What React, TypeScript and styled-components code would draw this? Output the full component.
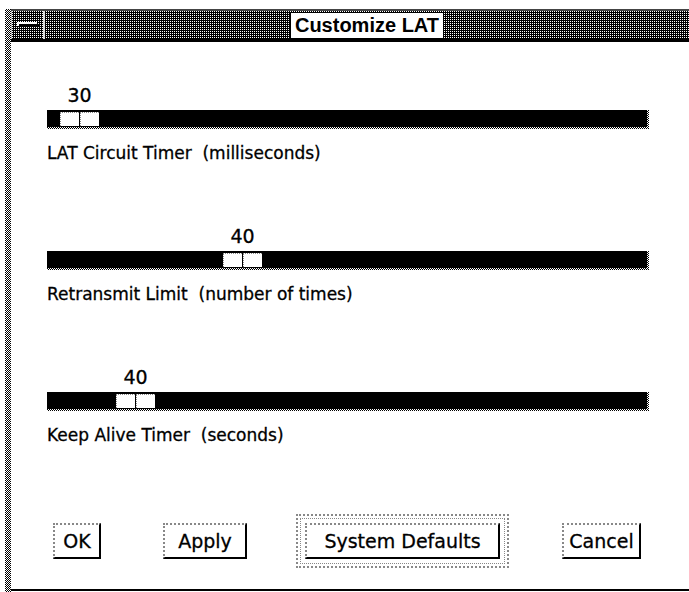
import styled, { createGlobalStyle } from "styled-components";

const GlobalStyle = createGlobalStyle`
  html, body { margin: 0; padding: 0; background: #fff; }
  body { font-family: "DejaVu Sans", "Liberation Sans", sans-serif; color: #000; }
`;

// 1px checkerboard, the X11 "50% grey"
const stipple = "repeating-conic-gradient(#000 0 25%, #fff 0 50%) 0 0 / 2px 2px";
// dark stipple for the title bar: one white dot per 2x2
const darkStipple = "repeating-conic-gradient(#fff 0 25%, #000 0 100%) 0 0 / 2px 2px";

type SliderSpec = { label: string; value: number; min: number; max: number };

const sliders: SliderSpec[] = [
  { label: "LAT Circuit Timer  (milliseconds)", value: 30, min: 10, max: 870 },
  { label: "Retransmit Limit  (number of times)", value: 40, min: 4, max: 119 },
  { label: "Keep Alive Timer  (seconds)", value: 40, min: 10, max: 255 },
];

const TRAVEL = 561;

function Slider({ spec }: { spec: SliderSpec }) {
  const offset = Math.round(((spec.value - spec.min) / (spec.max - spec.min)) * TRAVEL);
  return (
    <SliderGroup>
      <ValueRow>
        <Value style={{ marginLeft: offset }}>{spec.value}</Value>
      </ValueRow>
      <Track>
        <TrackFill>
          <Thumb style={{ marginLeft: offset }}>
            <ThumbHalf />
            <ThumbHalf />
          </Thumb>
        </TrackFill>
      </Track>
      <Label>{spec.label}</Label>
    </SliderGroup>
  );
}

export default function App() {
  return (
    <>
      <GlobalStyle />
      <Screen>
        <Frame />
        <Window>
          <TitleBar>
            <CloseBox>
              <svg width="22" height="6" viewBox="0 0 22 6">
                <rect x="2" y="2" width="20" height="2" fill="#000" />
                <rect x="0" y="0" width="20" height="2" fill="#fff" />
                <rect x="0" y="0" width="2" height="4" fill="#fff" />
              </svg>
            </CloseBox>
            <TitleArea>
              <TitleText>Customize LAT</TitleText>
            </TitleArea>
          </TitleBar>
          <Body>
            {sliders.map((s) => (
              <Slider key={s.label} spec={s} />
            ))}
            <ButtonRow>
              <Button $width={48}>OK</Button>
              <Button $width={84}>Apply</Button>
              <DefaultFrame>
                <DefaultRing>
                  <Button $width={195}>System Defaults</Button>
                </DefaultRing>
              </DefaultFrame>
              <Button $width={79}>Cancel</Button>
            </ButtonRow>
          </Body>
        </Window>
      </Screen>
    </>
  );
}

const Screen = styled.div`
  display: flex;
  height: 100vh;
  box-sizing: border-box;
  padding: 9px 0 0 5px;
`;

const Frame = styled.div`
  flex: none;
  width: 6px;
  background: ${stipple};
`;

const Window = styled.div`
  flex: 1;
  display: flex;
  flex-direction: column;
  border-bottom: 2px solid #000;
  margin-bottom: 1px;
`;

const TitleBar = styled.div`
  flex: none;
  display: flex;
  height: 33px;
  box-sizing: border-box;
  background: ${darkStipple};
  border-top: 2px solid #444;
  border-bottom: 3px solid #000;
`;

const CloseBox = styled.div`
  width: 31px;
  display: flex;
  align-items: center;
  justify-content: center;
  border-left: 1px solid #bbb;
  border-right: 2px solid #ddd;
`;

const TitleArea = styled.div`
  flex: 1;
  display: flex;
  align-items: center;
  justify-content: center;
`;

const TitleText = styled.div`
  background: #fff;
  border: 1px solid #000;
  font-family: "Liberation Sans", Arial, sans-serif;
  font-weight: bold;
  font-size: 20px;
  line-height: 25px;
  padding: 0 4px;
`;

const Body = styled.div`
  flex: 1;
  display: flex;
  flex-direction: column;
  background: #fff;
  padding: 43px 40px 0 36px;
`;

const SliderGroup = styled.div`
  display: flex;
  flex-direction: column;
  & + & {
    margin-top: 63px;
  }
`;

const ValueRow = styled.div`
  height: 20px;
  line-height: 20px;
  font-size: 19px;
  -webkit-text-stroke: 0.3px #000;
`;

const Value = styled.span`
  display: inline-block;
  width: 39px;
  text-align: center;
`;

const Track = styled.div`
  margin-top: 5px;
  height: 19px;
  box-sizing: border-box;
  padding: 0 2px 2px 0;
  background: ${stipple};
`;

const TrackFill = styled.div`
  height: 17px;
  box-sizing: border-box;
  padding-top: 2px;
  background: #000;
  display: flex;
`;

const Thumb = styled.div`
  width: 39px;
  height: 14px;
  display: flex;
  gap: 1px;
`;

const ThumbHalf = styled.div`
  flex: 1;
  background: #fff;
  border-top: 1px dotted #888;
  border-left: 1px dotted #888;
`;

const Label = styled.div`
  margin-top: 14px;
  font-size: 17px;
  line-height: 20px;
  white-space: pre;
  -webkit-text-stroke: 0.3px #000;
`;

const ButtonRow = styled.div`
  margin-top: 69px;
  display: grid;
  grid-template-columns: 110px 133px 266px auto;
  padding-left: 6px;
  align-items: center;
  justify-items: start;
`;

const Button = styled.button<{ $width: number }>`
  width: ${(p) => p.$width}px;
  height: 36px;
  padding: 0;
  background: #fff;
  color: #000;
  font-family: "DejaVu Sans", sans-serif;
  font-size: 19px;
  -webkit-text-stroke: 0.3px #000;
  border-top: 2px dotted #888;
  border-left: 2px dotted #888;
  border-right: 2px solid #000;
  border-bottom: 2px solid #000;
  border-radius: 0;
`;

const DefaultFrame = styled.div`
  border: 2px dotted #888;
  padding: 2px;
`;

const DefaultRing = styled.div`
  border: 1px dotted #888;
  padding: 4px;
  display: flex;
`;
